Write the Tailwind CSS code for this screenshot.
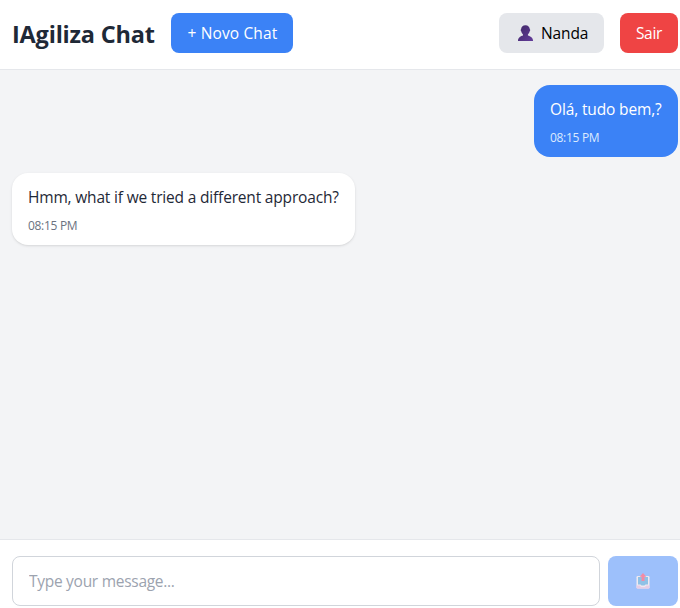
<!DOCTYPE html>
<html lang="pt-BR">
<head>
<meta charset="utf-8">
<title>IAgiliza Chat</title>
<script src="https://cdn.jsdelivr.net/npm/@tailwindcss/browser@4"></script>
</head>
<body class="font-['Segoe_UI','Open_Sans',sans-serif] text-[15.5px] leading-6">
<div class="flex h-[608px] w-[680px] flex-col overflow-hidden bg-[#f3f4f6]">
  <header class="flex h-[70px] shrink-0 items-start justify-between border-b border-[#e5e7eb] bg-white pt-[13px] pr-[2px] pl-3">
    <div class="flex items-center gap-4">
      <h1 class="w-[143px] pt-0.5 text-[23.5px] leading-8 font-bold tracking-[-0.2px] whitespace-nowrap text-[#1f2937]">IAgiliza Chat</h1>
      <button class="h-10 w-[122px] rounded-lg bg-[#3b82f6] pl-px tracking-[0.13px] whitespace-nowrap text-white">+ Novo Chat</button>
    </div>
    <div class="flex items-center gap-4">
      <button class="flex h-10 w-[105px] items-center rounded-lg bg-[#e5e7eb] pl-[19px] tracking-[-0.1px] whitespace-nowrap text-black">
        <svg class="mr-[7px] h-4 w-4 shrink-0" viewBox="0 0 16 16"><defs><linearGradient id="person" x1="0" y1="0" x2="1" y2="1"><stop offset="0" stop-color="#402866"/><stop offset="1" stop-color="#633c9a"/></linearGradient></defs><path fill="url(#person)" d="M7.500.2C4.700.2 3.100 1.900 3.100 4.300c-.5.1-.6 1.500.1 1.900.3 1.400 1 2.500 1.800 3.200v1C2.300 11.200-.1 12.300-.1 16h15.200c-.1-3.700-2.600-4.800-5.200-5.600v-1c.8-.7 1.500-1.800 1.800-3.200.7-.4.6-1.800.1-1.900C11.700 1.900 10.100.2 7.500.2Z"/></svg>
        Nanda
      </button>
      <button class="h-10 w-[58px] rounded-lg bg-[#ef4444] tracking-[-0.3px] whitespace-nowrap text-white">Sair</button>
    </div>
  </header>
  <main class="flex min-h-0 flex-1 flex-col gap-4 pt-[15px] pr-[2px] pl-3">
    <div class="h-[72px] w-[144px] self-end rounded-2xl bg-[#3b82f6] px-4 pt-3 whitespace-nowrap text-white">
      <p class="tracking-[-0.14px]">Olá, tudo bem,?</p>
      <p class="mt-[9px] text-[12px] leading-4 tracking-[-0.3px] text-[#dbeafe]">08:15 PM</p>
    </div>
    <div class="h-[72px] w-[343px] rounded-2xl bg-white px-4 pt-3 whitespace-nowrap text-[#1f2937] shadow-sm">
      <p class="tracking-[-0.18px]">Hmm, what if we tried a different approach?</p>
      <p class="mt-[9px] text-[12px] leading-4 tracking-[-0.3px] text-[#6b7280]">08:15 PM</p>
    </div>
  </main>
  <footer class="flex h-[69px] shrink-0 gap-2 border-t border-[#e5e7eb] bg-white pt-4 pr-[2px] pl-3">
    <input class="h-[50px] w-[588px] rounded-lg border border-[#d1d5db] px-4 tracking-[-0.28px] placeholder:text-[#9ca3af]" placeholder="Type your message...">
    <button aria-label="Enviar" class="flex h-[50px] w-[70px] items-center justify-center rounded-lg bg-[#9dc0fb]">
      <svg class="h-4 w-[14px]" viewBox="0 0 14 16"><rect x=".5" y="3" width="13" height="12.500" rx="1.200" fill="#eee9f0"/><path fill="#8fc1e6" d="M2 4h10v7.500H9.500l-1 1h-3l-1-1H2Z"/><path fill="#e6cde6" d="M.5 12.500H4l1 1.500h4l1-1.500h3.500V14.500a1 1 0 0 1-1 1h-11a1 1 0 0 1-1-1Z"/><path fill="#f18ba5" d="M7 0 10.300 3.700H8.500V8h-3V3.700H3.700Z"/></svg>
    </button>
  </footer>
</div>
</body>
</html>
